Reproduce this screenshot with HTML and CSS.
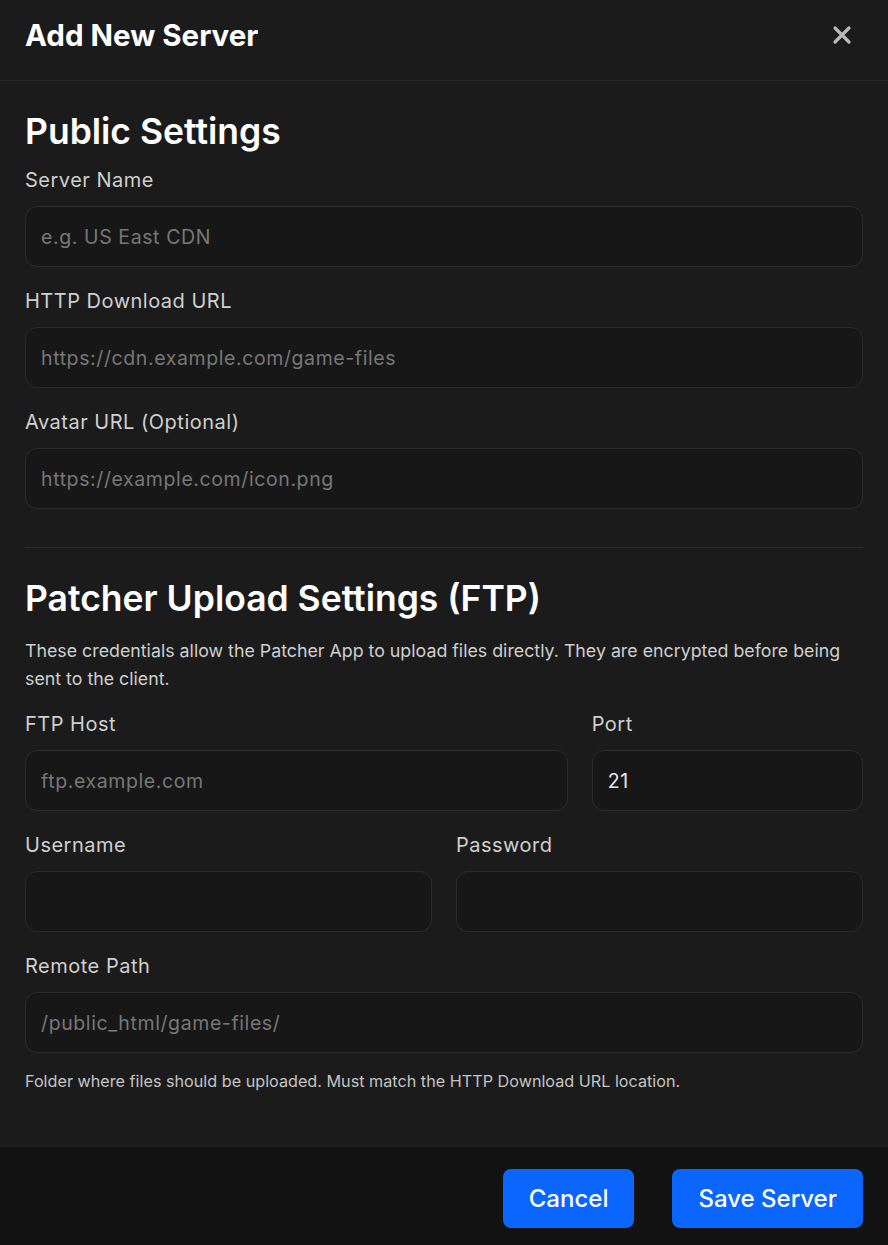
FILE: index.html
```html
<!DOCTYPE html>
<html>
<head>
    <title>Add New Server</title>
    <link rel="stylesheet" href="styles.css">
</head>
<body>
    <div class="modal">
        <div class="modal-header">
            <span class="modal-title">Add New Server</span>
            <button class="close-btn" aria-label="Close">
                <svg width="20" height="20" viewBox="0 0 20 20">
                    <path d="M3 3 L17 17 M17 3 L3 17" stroke="#b9b9b9" stroke-width="3.2" stroke-linecap="round"/>
                </svg>
            </button>
        </div>
        <div class="modal-body">
            <div class="section-title">Public Settings</div>
            <div class="field">
                <label>Server Name</label>
                <input type="text" class="text-input" placeholder="e.g. US East CDN">
            </div>
            <div class="field">
                <label>HTTP Download URL</label>
                <input type="text" class="text-input" placeholder="https://cdn.example.com/game-files">
            </div>
            <div class="field">
                <label>Avatar URL (Optional)</label>
                <input type="text" class="text-input" placeholder="https://example.com/icon.png">
            </div>
            <hr class="divider">
            <div class="section-title">Patcher Upload Settings (FTP)</div>
            <p class="section-desc">These credentials allow the Patcher App to upload files directly. They are encrypted before being sent to the client.</p>
            <div class="row row-host">
                <div class="field">
                    <label>FTP Host</label>
                    <input type="text" class="text-input" placeholder="ftp.example.com">
                </div>
                <div class="field">
                    <label>Port</label>
                    <input type="text" class="text-input" value="21">
                </div>
            </div>
            <div class="row row-half">
                <div class="field">
                    <label>Username</label>
                    <input type="text" class="text-input">
                </div>
                <div class="field">
                    <label>Password</label>
                    <input type="password" class="text-input">
                </div>
            </div>
            <div class="field field-last">
                <label>Remote Path</label>
                <input type="text" class="text-input" placeholder="/public_html/game-files/">
                <div class="help-text">Folder where files should be uploaded. Must match the HTTP Download URL location.</div>
            </div>
        </div>
        <div class="modal-footer">
            <button class="btn">Cancel</button>
            <button class="btn">Save Server</button>
        </div>
    </div>
</body>
</html>
```

FILE: styles.css
```css
body {
    margin: 0;
    background: #1b1b1b;
    font-family: Inter, "Noto Sans", sans-serif;
    color: #fff;
}
.modal {
    width: 888px;
    min-height: 1245px;
    display: flex;
    flex-direction: column;
    background: #1b1b1b;
}
.modal-header {
    display: flex;
    align-items: center;
    justify-content: space-between;
    padding: 0 25px 11px;
    border-bottom: 1px solid #262626;
    box-sizing: border-box;
    height: 81px;
}
.modal-title {
    font-size: 29.5px;
    font-weight: 700;
    color: #fff;
}
.close-btn {
    background: none;
    border: none;
    padding: 0;
    margin-right: 11px;
    width: 20px;
    height: 20px;
    cursor: pointer;
}
.modal-body {
    padding: 29px 25px 54px;
}
.section-title {
    font-size: 35.5px;
    line-height: 44px;
    font-weight: 600;
    color: #fff;
    margin-bottom: 12px;
}
.field {
    display: flex;
    flex-direction: column;
    margin-bottom: 20px;
}
.field label {
    font-size: 20px;
    line-height: 28px;
    letter-spacing: 0.5px;
    color: #cfcfcf;
    margin-bottom: 12px;
}
.text-input {
    width: 100%;
    height: 61px;
    box-sizing: border-box;
    padding: 0 15px;
    background: #171717;
    border: 1px solid #2b2b2b;
    border-radius: 12px;
    font-family: Inter, "Noto Sans", sans-serif;
    font-size: 19.5px;
    letter-spacing: 0.6px;
    color: #e8e8e8;
    outline: none;
}
.text-input::placeholder {
    color: #777;
}
.divider {
    border: none;
    border-top: 1px solid #2a2a2a;
    margin: 38px 0 29px;
}
.section-desc {
    font-size: 17.8px;
    line-height: 28px;
    color: #cfcfcf;
    margin: 16px 0 17px;
}
.row {
    display: grid;
    gap: 24px;
}
.row-host {
    grid-template-columns: minmax(0, 2fr) minmax(0, 1fr);
}
.row-half {
    grid-template-columns: minmax(0, 1fr) minmax(0, 1fr);
}
.field-last {
    margin-bottom: 0;
}
.help-text {
    font-size: 16.2px;
    line-height: 22px;
    color: #c4c4c4;
    margin-top: 17px;
}
.modal-footer {
    flex: 1;
    background: #121212;
    border-top: 1px solid #1f1f1f;
    display: flex;
    justify-content: flex-end;
    align-items: flex-start;
    gap: 38px;
    padding: 22px 25px;
}
.btn {
    height: 59px;
    padding: 0 26px;
    background: #0a66ff;
    color: #fff;
    border: none;
    border-radius: 8px;
    font-family: Inter, "Noto Sans", sans-serif;
    font-size: 24px;
    font-weight: 500;
    cursor: pointer;
}
```
